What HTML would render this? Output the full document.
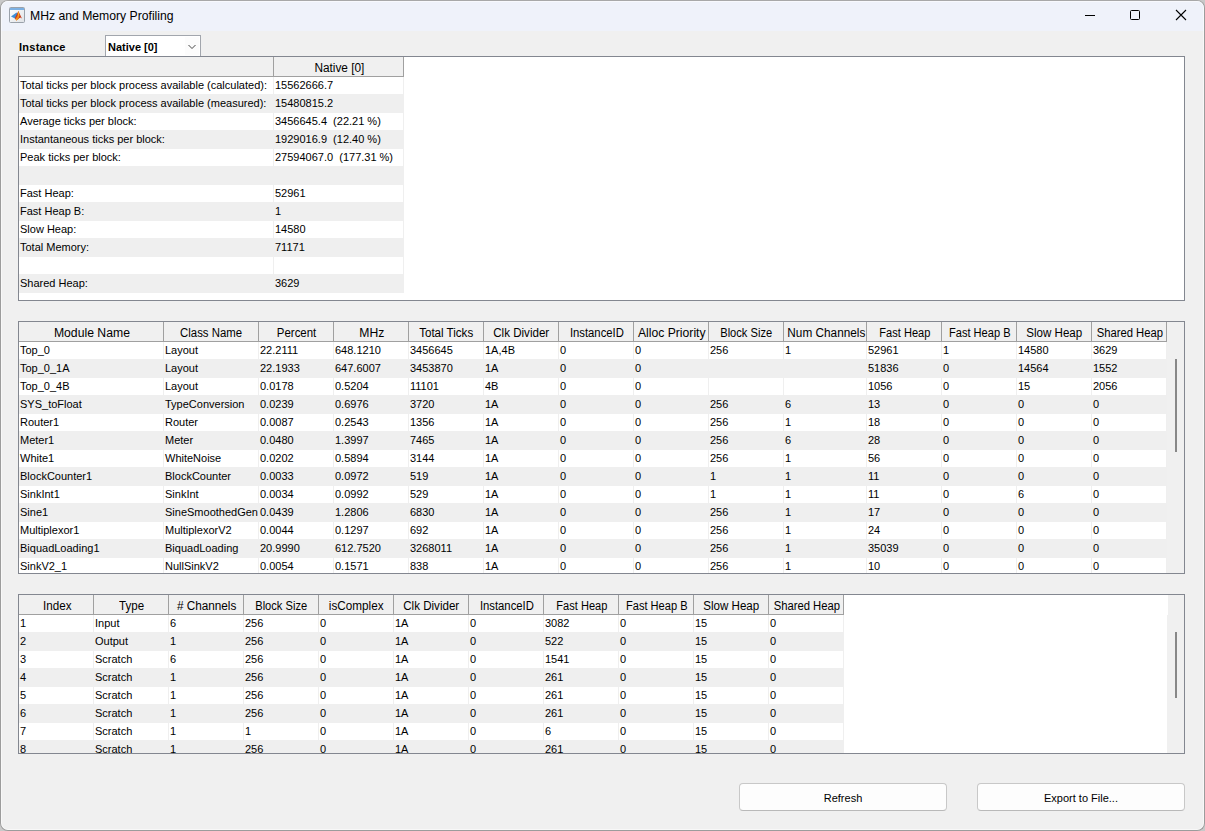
<!DOCTYPE html>
<html><head><meta charset="utf-8"><title>MHz and Memory Profiling</title>
<style>
*{margin:0;padding:0;box-sizing:border-box}
html,body{width:1205px;height:831px;overflow:hidden;background:#c9c9c9;font-family:"Liberation Sans",sans-serif;color:#000}
.a{position:absolute}
#win{position:absolute;left:0;top:0;width:1205px;height:831px;background:#f0f0f0;border:1px solid #9c9c9c;border-top-color:#a8a8a8;border-radius:8px;overflow:hidden}
#tb{position:absolute;left:0;top:0;width:1203px;height:30px;background:#eff2fa}
.t11{font-size:11px;line-height:18px;white-space:nowrap}
.hd{position:absolute;font-size:12.5px;line-height:20px;padding-top:1px;padding-left:2px;text-align:center;white-space:nowrap;overflow:hidden;background:#f0f0f0}
.panel{position:absolute;border:1px solid #838790;background:#fff;overflow:hidden}
.row{position:absolute;height:18px}
.g{background:#efefef}
.w{background:transparent}
.cell{position:absolute;top:0;height:18px;font-size:11px;line-height:18px;white-space:pre;overflow:hidden;padding-left:2px}
.sep{position:absolute;top:0;width:1px;height:100%;background:#efefef}
.hsep{position:absolute;width:1px;background:#a0a0a0}
.btn{position:absolute;background:#fdfdfd;border:1px solid #c8c8c8;border-bottom-color:#b9b9b9;border-radius:4px;font-size:11px;text-align:center;line-height:26px;padding-top:1px}
</style></head>
<body>
<div id="win"><div id="tb"></div><svg class="a" style="left:8px;top:6px" width="16" height="16" viewBox="0 0 16 16">
<defs><linearGradient id="ig" x1="0" y1="0" x2="1" y2="1"><stop offset="0" stop-color="#ffffff"/><stop offset="1" stop-color="#dfe2e6"/></linearGradient></defs>
<rect x="0.5" y="0.5" width="15" height="15" rx="1" fill="url(#ig)" stroke="#9aa1aa"/>
<rect x="1" y="1" width="14" height="2" fill="#7cb0e3"/>
<path d="M2 9.5 L7.6 5.6 L9 7.8 L6 11.5 Z" fill="#3d8ed6"/>
<path d="M5.8 11.2 L9.4 4 L12.9 11.6 L11.2 10.6 L7.4 13.5 Z" fill="#c8381a"/>
<path d="M9.4 4 L10.6 8.2 L9.2 12.6 L7.4 13.5 L6.6 12 L8.6 8.6 Z" fill="#f08a1c"/>
<path d="M9.4 4.2 L10 7 L9 9.5 Z" fill="#f7c52a"/>
<path d="M7 12.8 L8.4 12 L7.6 13.5 Z" fill="#f7c52a"/>
</svg><div class="a" style="left:29px;top:7px;font-size:12.2px;line-height:16px;white-space:nowrap">MHz and Memory Profiling</div><div class="a" style="left:1084px;top:14px;width:10px;height:1px;background:#000"></div><div class="a" style="left:1129px;top:9px;width:10px;height:10px;border:1px solid #000;border-radius:1.5px"></div><svg class="a" style="left:1174px;top:8px" width="12" height="12" viewBox="0 0 12 12"><path d="M1 1 L11 11 M11 1 L1 11" stroke="#000" stroke-width="1.1"/></svg><div class="a" style="left:18px;top:37px;font-size:11px;font-weight:bold;line-height:18px;letter-spacing:0.25px">Instance</div><div class="a" style="left:104px;top:34px;width:96px;height:22px;background:#fff;border:1px solid #a2a6ad;border-bottom:none"></div><div class="a" style="left:184px;top:36px;width:14px;height:18px;background:#fcfcfc"></div><div class="a" style="left:107px;top:37px;font-size:11px;font-weight:bold;line-height:18px">Native [0]</div><svg class="a" style="left:186px;top:43px" width="10" height="6" viewBox="0 0 10 6"><path d="M1.5 1 L5 4.5 L8.5 1" fill="none" stroke="#333" stroke-width="0.9"/></svg><div class="panel" style="left:17px;top:55px;width:1167px;height:245px"><div class="row w" style="left:0;top:19px;width:385px;height:18px"><div class="cell" style="left:-1px;width:255px;padding-left:2px">Total ticks per block process available (calculated):</div><div class="sep" style="left:254px"></div><div class="cell" style="left:254px;width:130px;padding-left:2px">15562666.7</div><div class="sep" style="left:384px"></div></div><div class="row g" style="left:0;top:37px;width:385px;height:19px"><div class="cell" style="left:-1px;width:255px;padding-left:2px">Total ticks per block process available (measured):</div><div class="sep" style="left:254px"></div><div class="cell" style="left:254px;width:130px;padding-left:2px">15480815.2</div><div class="sep" style="left:384px"></div></div><div class="row w" style="left:0;top:55px;width:385px;height:18px"><div class="cell" style="left:-1px;width:255px;padding-left:2px">Average ticks per block:</div><div class="sep" style="left:254px"></div><div class="cell" style="left:254px;width:130px;padding-left:2px">3456645.4  (22.21 %)</div><div class="sep" style="left:384px"></div></div><div class="row g" style="left:0;top:73px;width:385px;height:19px"><div class="cell" style="left:-1px;width:255px;padding-left:2px">Instantaneous ticks per block:</div><div class="sep" style="left:254px"></div><div class="cell" style="left:254px;width:130px;padding-left:2px">1929016.9  (12.40 %)</div><div class="sep" style="left:384px"></div></div><div class="row w" style="left:0;top:91px;width:385px;height:18px"><div class="cell" style="left:-1px;width:255px;padding-left:2px">Peak ticks per block:</div><div class="sep" style="left:254px"></div><div class="cell" style="left:254px;width:130px;padding-left:2px">27594067.0  (177.31 %)</div><div class="sep" style="left:384px"></div></div><div class="row g" style="left:0;top:109px;width:385px;height:19px"><div class="sep" style="left:254px"></div><div class="sep" style="left:384px"></div></div><div class="row w" style="left:0;top:127px;width:385px;height:18px"><div class="cell" style="left:-1px;width:255px;padding-left:2px">Fast Heap:</div><div class="sep" style="left:254px"></div><div class="cell" style="left:254px;width:130px;padding-left:2px">52961</div><div class="sep" style="left:384px"></div></div><div class="row g" style="left:0;top:145px;width:385px;height:19px"><div class="cell" style="left:-1px;width:255px;padding-left:2px">Fast Heap B:</div><div class="sep" style="left:254px"></div><div class="cell" style="left:254px;width:130px;padding-left:2px">1</div><div class="sep" style="left:384px"></div></div><div class="row w" style="left:0;top:163px;width:385px;height:18px"><div class="cell" style="left:-1px;width:255px;padding-left:2px">Slow Heap:</div><div class="sep" style="left:254px"></div><div class="cell" style="left:254px;width:130px;padding-left:2px">14580</div><div class="sep" style="left:384px"></div></div><div class="row g" style="left:0;top:181px;width:385px;height:19px"><div class="cell" style="left:-1px;width:255px;padding-left:2px">Total Memory:</div><div class="sep" style="left:254px"></div><div class="cell" style="left:254px;width:130px;padding-left:2px">71171</div><div class="sep" style="left:384px"></div></div><div class="row w" style="left:0;top:199px;width:385px;height:18px"><div class="sep" style="left:254px"></div><div class="sep" style="left:384px"></div></div><div class="row g" style="left:0;top:217px;width:385px;height:19px"><div class="cell" style="left:-1px;width:255px;padding-left:2px">Shared Heap:</div><div class="sep" style="left:254px"></div><div class="cell" style="left:254px;width:130px;padding-left:2px">3629</div><div class="sep" style="left:384px"></div></div><div class="hd" style="left:0px;top:0;width:254px;height:19px"><span style="display:inline-block;transform:scaleX(1.0)"></span></div><div class="hd" style="left:254px;top:0;width:130px;height:19px"><span style="display:inline-block;transform:scaleX(0.947)">Native [0]</span></div><div class="a" style="left:0;top:19px;width:385px;height:1px;background:#a0a0a0"></div><div class="hsep" style="left:254px;top:0;height:19px"></div><div class="hsep" style="left:384px;top:0;height:19px"></div></div><div class="panel" style="left:17px;top:320px;width:1167px;height:253px"><div class="row w" style="left:0;top:19px;width:1148px;height:18px"><div class="cell" style="left:-1px;width:145px;padding-left:2px">Top_0</div><div class="sep" style="left:144px"></div><div class="cell" style="left:144px;width:95px;padding-left:2px">Layout</div><div class="sep" style="left:239px"></div><div class="cell" style="left:239px;width:75px;padding-left:2px">22.2111</div><div class="sep" style="left:314px"></div><div class="cell" style="left:314px;width:75px;padding-left:2px">648.1210</div><div class="sep" style="left:389px"></div><div class="cell" style="left:389px;width:75px;padding-left:2px">3456645</div><div class="sep" style="left:464px"></div><div class="cell" style="left:464px;width:75px;padding-left:2px">1A,4B</div><div class="sep" style="left:539px"></div><div class="cell" style="left:539px;width:75px;padding-left:2px">0</div><div class="sep" style="left:614px"></div><div class="cell" style="left:614px;width:75px;padding-left:2px">0</div><div class="sep" style="left:689px"></div><div class="cell" style="left:689px;width:75px;padding-left:2px">256</div><div class="sep" style="left:764px"></div><div class="cell" style="left:764px;width:83px;padding-left:2px">1</div><div class="sep" style="left:847px"></div><div class="cell" style="left:847px;width:75px;padding-left:2px">52961</div><div class="sep" style="left:922px"></div><div class="cell" style="left:922px;width:75px;padding-left:2px">1</div><div class="sep" style="left:997px"></div><div class="cell" style="left:997px;width:75px;padding-left:2px">14580</div><div class="sep" style="left:1072px"></div><div class="cell" style="left:1072px;width:75px;padding-left:2px">3629</div><div class="sep" style="left:1147px"></div></div><div class="row g" style="left:0;top:37px;width:1148px;height:19px"><div class="cell" style="left:-1px;width:145px;padding-left:2px">Top_0_1A</div><div class="sep" style="left:144px"></div><div class="cell" style="left:144px;width:95px;padding-left:2px">Layout</div><div class="sep" style="left:239px"></div><div class="cell" style="left:239px;width:75px;padding-left:2px">22.1933</div><div class="sep" style="left:314px"></div><div class="cell" style="left:314px;width:75px;padding-left:2px">647.6007</div><div class="sep" style="left:389px"></div><div class="cell" style="left:389px;width:75px;padding-left:2px">3453870</div><div class="sep" style="left:464px"></div><div class="cell" style="left:464px;width:75px;padding-left:2px">1A</div><div class="sep" style="left:539px"></div><div class="cell" style="left:539px;width:75px;padding-left:2px">0</div><div class="sep" style="left:614px"></div><div class="cell" style="left:614px;width:75px;padding-left:2px">0</div><div class="sep" style="left:689px"></div><div class="sep" style="left:764px"></div><div class="sep" style="left:847px"></div><div class="cell" style="left:847px;width:75px;padding-left:2px">51836</div><div class="sep" style="left:922px"></div><div class="cell" style="left:922px;width:75px;padding-left:2px">0</div><div class="sep" style="left:997px"></div><div class="cell" style="left:997px;width:75px;padding-left:2px">14564</div><div class="sep" style="left:1072px"></div><div class="cell" style="left:1072px;width:75px;padding-left:2px">1552</div><div class="sep" style="left:1147px"></div></div><div class="row w" style="left:0;top:55px;width:1148px;height:18px"><div class="cell" style="left:-1px;width:145px;padding-left:2px">Top_0_4B</div><div class="sep" style="left:144px"></div><div class="cell" style="left:144px;width:95px;padding-left:2px">Layout</div><div class="sep" style="left:239px"></div><div class="cell" style="left:239px;width:75px;padding-left:2px">0.0178</div><div class="sep" style="left:314px"></div><div class="cell" style="left:314px;width:75px;padding-left:2px">0.5204</div><div class="sep" style="left:389px"></div><div class="cell" style="left:389px;width:75px;padding-left:2px">11101</div><div class="sep" style="left:464px"></div><div class="cell" style="left:464px;width:75px;padding-left:2px">4B</div><div class="sep" style="left:539px"></div><div class="cell" style="left:539px;width:75px;padding-left:2px">0</div><div class="sep" style="left:614px"></div><div class="cell" style="left:614px;width:75px;padding-left:2px">0</div><div class="sep" style="left:689px"></div><div class="sep" style="left:764px"></div><div class="sep" style="left:847px"></div><div class="cell" style="left:847px;width:75px;padding-left:2px">1056</div><div class="sep" style="left:922px"></div><div class="cell" style="left:922px;width:75px;padding-left:2px">0</div><div class="sep" style="left:997px"></div><div class="cell" style="left:997px;width:75px;padding-left:2px">15</div><div class="sep" style="left:1072px"></div><div class="cell" style="left:1072px;width:75px;padding-left:2px">2056</div><div class="sep" style="left:1147px"></div></div><div class="row g" style="left:0;top:73px;width:1148px;height:19px"><div class="cell" style="left:-1px;width:145px;padding-left:2px">SYS_toFloat</div><div class="sep" style="left:144px"></div><div class="cell" style="left:144px;width:95px;padding-left:2px">TypeConversion</div><div class="sep" style="left:239px"></div><div class="cell" style="left:239px;width:75px;padding-left:2px">0.0239</div><div class="sep" style="left:314px"></div><div class="cell" style="left:314px;width:75px;padding-left:2px">0.6976</div><div class="sep" style="left:389px"></div><div class="cell" style="left:389px;width:75px;padding-left:2px">3720</div><div class="sep" style="left:464px"></div><div class="cell" style="left:464px;width:75px;padding-left:2px">1A</div><div class="sep" style="left:539px"></div><div class="cell" style="left:539px;width:75px;padding-left:2px">0</div><div class="sep" style="left:614px"></div><div class="cell" style="left:614px;width:75px;padding-left:2px">0</div><div class="sep" style="left:689px"></div><div class="cell" style="left:689px;width:75px;padding-left:2px">256</div><div class="sep" style="left:764px"></div><div class="cell" style="left:764px;width:83px;padding-left:2px">6</div><div class="sep" style="left:847px"></div><div class="cell" style="left:847px;width:75px;padding-left:2px">13</div><div class="sep" style="left:922px"></div><div class="cell" style="left:922px;width:75px;padding-left:2px">0</div><div class="sep" style="left:997px"></div><div class="cell" style="left:997px;width:75px;padding-left:2px">0</div><div class="sep" style="left:1072px"></div><div class="cell" style="left:1072px;width:75px;padding-left:2px">0</div><div class="sep" style="left:1147px"></div></div><div class="row w" style="left:0;top:91px;width:1148px;height:18px"><div class="cell" style="left:-1px;width:145px;padding-left:2px">Router1</div><div class="sep" style="left:144px"></div><div class="cell" style="left:144px;width:95px;padding-left:2px">Router</div><div class="sep" style="left:239px"></div><div class="cell" style="left:239px;width:75px;padding-left:2px">0.0087</div><div class="sep" style="left:314px"></div><div class="cell" style="left:314px;width:75px;padding-left:2px">0.2543</div><div class="sep" style="left:389px"></div><div class="cell" style="left:389px;width:75px;padding-left:2px">1356</div><div class="sep" style="left:464px"></div><div class="cell" style="left:464px;width:75px;padding-left:2px">1A</div><div class="sep" style="left:539px"></div><div class="cell" style="left:539px;width:75px;padding-left:2px">0</div><div class="sep" style="left:614px"></div><div class="cell" style="left:614px;width:75px;padding-left:2px">0</div><div class="sep" style="left:689px"></div><div class="cell" style="left:689px;width:75px;padding-left:2px">256</div><div class="sep" style="left:764px"></div><div class="cell" style="left:764px;width:83px;padding-left:2px">1</div><div class="sep" style="left:847px"></div><div class="cell" style="left:847px;width:75px;padding-left:2px">18</div><div class="sep" style="left:922px"></div><div class="cell" style="left:922px;width:75px;padding-left:2px">0</div><div class="sep" style="left:997px"></div><div class="cell" style="left:997px;width:75px;padding-left:2px">0</div><div class="sep" style="left:1072px"></div><div class="cell" style="left:1072px;width:75px;padding-left:2px">0</div><div class="sep" style="left:1147px"></div></div><div class="row g" style="left:0;top:109px;width:1148px;height:19px"><div class="cell" style="left:-1px;width:145px;padding-left:2px">Meter1</div><div class="sep" style="left:144px"></div><div class="cell" style="left:144px;width:95px;padding-left:2px">Meter</div><div class="sep" style="left:239px"></div><div class="cell" style="left:239px;width:75px;padding-left:2px">0.0480</div><div class="sep" style="left:314px"></div><div class="cell" style="left:314px;width:75px;padding-left:2px">1.3997</div><div class="sep" style="left:389px"></div><div class="cell" style="left:389px;width:75px;padding-left:2px">7465</div><div class="sep" style="left:464px"></div><div class="cell" style="left:464px;width:75px;padding-left:2px">1A</div><div class="sep" style="left:539px"></div><div class="cell" style="left:539px;width:75px;padding-left:2px">0</div><div class="sep" style="left:614px"></div><div class="cell" style="left:614px;width:75px;padding-left:2px">0</div><div class="sep" style="left:689px"></div><div class="cell" style="left:689px;width:75px;padding-left:2px">256</div><div class="sep" style="left:764px"></div><div class="cell" style="left:764px;width:83px;padding-left:2px">6</div><div class="sep" style="left:847px"></div><div class="cell" style="left:847px;width:75px;padding-left:2px">28</div><div class="sep" style="left:922px"></div><div class="cell" style="left:922px;width:75px;padding-left:2px">0</div><div class="sep" style="left:997px"></div><div class="cell" style="left:997px;width:75px;padding-left:2px">0</div><div class="sep" style="left:1072px"></div><div class="cell" style="left:1072px;width:75px;padding-left:2px">0</div><div class="sep" style="left:1147px"></div></div><div class="row w" style="left:0;top:127px;width:1148px;height:18px"><div class="cell" style="left:-1px;width:145px;padding-left:2px">White1</div><div class="sep" style="left:144px"></div><div class="cell" style="left:144px;width:95px;padding-left:2px">WhiteNoise</div><div class="sep" style="left:239px"></div><div class="cell" style="left:239px;width:75px;padding-left:2px">0.0202</div><div class="sep" style="left:314px"></div><div class="cell" style="left:314px;width:75px;padding-left:2px">0.5894</div><div class="sep" style="left:389px"></div><div class="cell" style="left:389px;width:75px;padding-left:2px">3144</div><div class="sep" style="left:464px"></div><div class="cell" style="left:464px;width:75px;padding-left:2px">1A</div><div class="sep" style="left:539px"></div><div class="cell" style="left:539px;width:75px;padding-left:2px">0</div><div class="sep" style="left:614px"></div><div class="cell" style="left:614px;width:75px;padding-left:2px">0</div><div class="sep" style="left:689px"></div><div class="cell" style="left:689px;width:75px;padding-left:2px">256</div><div class="sep" style="left:764px"></div><div class="cell" style="left:764px;width:83px;padding-left:2px">1</div><div class="sep" style="left:847px"></div><div class="cell" style="left:847px;width:75px;padding-left:2px">56</div><div class="sep" style="left:922px"></div><div class="cell" style="left:922px;width:75px;padding-left:2px">0</div><div class="sep" style="left:997px"></div><div class="cell" style="left:997px;width:75px;padding-left:2px">0</div><div class="sep" style="left:1072px"></div><div class="cell" style="left:1072px;width:75px;padding-left:2px">0</div><div class="sep" style="left:1147px"></div></div><div class="row g" style="left:0;top:145px;width:1148px;height:19px"><div class="cell" style="left:-1px;width:145px;padding-left:2px">BlockCounter1</div><div class="sep" style="left:144px"></div><div class="cell" style="left:144px;width:95px;padding-left:2px">BlockCounter</div><div class="sep" style="left:239px"></div><div class="cell" style="left:239px;width:75px;padding-left:2px">0.0033</div><div class="sep" style="left:314px"></div><div class="cell" style="left:314px;width:75px;padding-left:2px">0.0972</div><div class="sep" style="left:389px"></div><div class="cell" style="left:389px;width:75px;padding-left:2px">519</div><div class="sep" style="left:464px"></div><div class="cell" style="left:464px;width:75px;padding-left:2px">1A</div><div class="sep" style="left:539px"></div><div class="cell" style="left:539px;width:75px;padding-left:2px">0</div><div class="sep" style="left:614px"></div><div class="cell" style="left:614px;width:75px;padding-left:2px">0</div><div class="sep" style="left:689px"></div><div class="cell" style="left:689px;width:75px;padding-left:2px">1</div><div class="sep" style="left:764px"></div><div class="cell" style="left:764px;width:83px;padding-left:2px">1</div><div class="sep" style="left:847px"></div><div class="cell" style="left:847px;width:75px;padding-left:2px">11</div><div class="sep" style="left:922px"></div><div class="cell" style="left:922px;width:75px;padding-left:2px">0</div><div class="sep" style="left:997px"></div><div class="cell" style="left:997px;width:75px;padding-left:2px">0</div><div class="sep" style="left:1072px"></div><div class="cell" style="left:1072px;width:75px;padding-left:2px">0</div><div class="sep" style="left:1147px"></div></div><div class="row w" style="left:0;top:163px;width:1148px;height:18px"><div class="cell" style="left:-1px;width:145px;padding-left:2px">SinkInt1</div><div class="sep" style="left:144px"></div><div class="cell" style="left:144px;width:95px;padding-left:2px">SinkInt</div><div class="sep" style="left:239px"></div><div class="cell" style="left:239px;width:75px;padding-left:2px">0.0034</div><div class="sep" style="left:314px"></div><div class="cell" style="left:314px;width:75px;padding-left:2px">0.0992</div><div class="sep" style="left:389px"></div><div class="cell" style="left:389px;width:75px;padding-left:2px">529</div><div class="sep" style="left:464px"></div><div class="cell" style="left:464px;width:75px;padding-left:2px">1A</div><div class="sep" style="left:539px"></div><div class="cell" style="left:539px;width:75px;padding-left:2px">0</div><div class="sep" style="left:614px"></div><div class="cell" style="left:614px;width:75px;padding-left:2px">0</div><div class="sep" style="left:689px"></div><div class="cell" style="left:689px;width:75px;padding-left:2px">1</div><div class="sep" style="left:764px"></div><div class="cell" style="left:764px;width:83px;padding-left:2px">1</div><div class="sep" style="left:847px"></div><div class="cell" style="left:847px;width:75px;padding-left:2px">11</div><div class="sep" style="left:922px"></div><div class="cell" style="left:922px;width:75px;padding-left:2px">0</div><div class="sep" style="left:997px"></div><div class="cell" style="left:997px;width:75px;padding-left:2px">6</div><div class="sep" style="left:1072px"></div><div class="cell" style="left:1072px;width:75px;padding-left:2px">0</div><div class="sep" style="left:1147px"></div></div><div class="row g" style="left:0;top:181px;width:1148px;height:19px"><div class="cell" style="left:-1px;width:145px;padding-left:2px">Sine1</div><div class="sep" style="left:144px"></div><div class="cell" style="left:144px;width:95px;padding-left:2px">SineSmoothedGen</div><div class="sep" style="left:239px"></div><div class="cell" style="left:239px;width:75px;padding-left:2px">0.0439</div><div class="sep" style="left:314px"></div><div class="cell" style="left:314px;width:75px;padding-left:2px">1.2806</div><div class="sep" style="left:389px"></div><div class="cell" style="left:389px;width:75px;padding-left:2px">6830</div><div class="sep" style="left:464px"></div><div class="cell" style="left:464px;width:75px;padding-left:2px">1A</div><div class="sep" style="left:539px"></div><div class="cell" style="left:539px;width:75px;padding-left:2px">0</div><div class="sep" style="left:614px"></div><div class="cell" style="left:614px;width:75px;padding-left:2px">0</div><div class="sep" style="left:689px"></div><div class="cell" style="left:689px;width:75px;padding-left:2px">256</div><div class="sep" style="left:764px"></div><div class="cell" style="left:764px;width:83px;padding-left:2px">1</div><div class="sep" style="left:847px"></div><div class="cell" style="left:847px;width:75px;padding-left:2px">17</div><div class="sep" style="left:922px"></div><div class="cell" style="left:922px;width:75px;padding-left:2px">0</div><div class="sep" style="left:997px"></div><div class="cell" style="left:997px;width:75px;padding-left:2px">0</div><div class="sep" style="left:1072px"></div><div class="cell" style="left:1072px;width:75px;padding-left:2px">0</div><div class="sep" style="left:1147px"></div></div><div class="row w" style="left:0;top:199px;width:1148px;height:18px"><div class="cell" style="left:-1px;width:145px;padding-left:2px">Multiplexor1</div><div class="sep" style="left:144px"></div><div class="cell" style="left:144px;width:95px;padding-left:2px">MultiplexorV2</div><div class="sep" style="left:239px"></div><div class="cell" style="left:239px;width:75px;padding-left:2px">0.0044</div><div class="sep" style="left:314px"></div><div class="cell" style="left:314px;width:75px;padding-left:2px">0.1297</div><div class="sep" style="left:389px"></div><div class="cell" style="left:389px;width:75px;padding-left:2px">692</div><div class="sep" style="left:464px"></div><div class="cell" style="left:464px;width:75px;padding-left:2px">1A</div><div class="sep" style="left:539px"></div><div class="cell" style="left:539px;width:75px;padding-left:2px">0</div><div class="sep" style="left:614px"></div><div class="cell" style="left:614px;width:75px;padding-left:2px">0</div><div class="sep" style="left:689px"></div><div class="cell" style="left:689px;width:75px;padding-left:2px">256</div><div class="sep" style="left:764px"></div><div class="cell" style="left:764px;width:83px;padding-left:2px">1</div><div class="sep" style="left:847px"></div><div class="cell" style="left:847px;width:75px;padding-left:2px">24</div><div class="sep" style="left:922px"></div><div class="cell" style="left:922px;width:75px;padding-left:2px">0</div><div class="sep" style="left:997px"></div><div class="cell" style="left:997px;width:75px;padding-left:2px">0</div><div class="sep" style="left:1072px"></div><div class="cell" style="left:1072px;width:75px;padding-left:2px">0</div><div class="sep" style="left:1147px"></div></div><div class="row g" style="left:0;top:217px;width:1148px;height:19px"><div class="cell" style="left:-1px;width:145px;padding-left:2px">BiquadLoading1</div><div class="sep" style="left:144px"></div><div class="cell" style="left:144px;width:95px;padding-left:2px">BiquadLoading</div><div class="sep" style="left:239px"></div><div class="cell" style="left:239px;width:75px;padding-left:2px">20.9990</div><div class="sep" style="left:314px"></div><div class="cell" style="left:314px;width:75px;padding-left:2px">612.7520</div><div class="sep" style="left:389px"></div><div class="cell" style="left:389px;width:75px;padding-left:2px">3268011</div><div class="sep" style="left:464px"></div><div class="cell" style="left:464px;width:75px;padding-left:2px">1A</div><div class="sep" style="left:539px"></div><div class="cell" style="left:539px;width:75px;padding-left:2px">0</div><div class="sep" style="left:614px"></div><div class="cell" style="left:614px;width:75px;padding-left:2px">0</div><div class="sep" style="left:689px"></div><div class="cell" style="left:689px;width:75px;padding-left:2px">256</div><div class="sep" style="left:764px"></div><div class="cell" style="left:764px;width:83px;padding-left:2px">1</div><div class="sep" style="left:847px"></div><div class="cell" style="left:847px;width:75px;padding-left:2px">35039</div><div class="sep" style="left:922px"></div><div class="cell" style="left:922px;width:75px;padding-left:2px">0</div><div class="sep" style="left:997px"></div><div class="cell" style="left:997px;width:75px;padding-left:2px">0</div><div class="sep" style="left:1072px"></div><div class="cell" style="left:1072px;width:75px;padding-left:2px">0</div><div class="sep" style="left:1147px"></div></div><div class="row w" style="left:0;top:235px;width:1148px;height:18px"><div class="cell" style="left:-1px;width:145px;padding-left:2px">SinkV2_1</div><div class="sep" style="left:144px"></div><div class="cell" style="left:144px;width:95px;padding-left:2px">NullSinkV2</div><div class="sep" style="left:239px"></div><div class="cell" style="left:239px;width:75px;padding-left:2px">0.0054</div><div class="sep" style="left:314px"></div><div class="cell" style="left:314px;width:75px;padding-left:2px">0.1571</div><div class="sep" style="left:389px"></div><div class="cell" style="left:389px;width:75px;padding-left:2px">838</div><div class="sep" style="left:464px"></div><div class="cell" style="left:464px;width:75px;padding-left:2px">1A</div><div class="sep" style="left:539px"></div><div class="cell" style="left:539px;width:75px;padding-left:2px">0</div><div class="sep" style="left:614px"></div><div class="cell" style="left:614px;width:75px;padding-left:2px">0</div><div class="sep" style="left:689px"></div><div class="cell" style="left:689px;width:75px;padding-left:2px">256</div><div class="sep" style="left:764px"></div><div class="cell" style="left:764px;width:83px;padding-left:2px">1</div><div class="sep" style="left:847px"></div><div class="cell" style="left:847px;width:75px;padding-left:2px">10</div><div class="sep" style="left:922px"></div><div class="cell" style="left:922px;width:75px;padding-left:2px">0</div><div class="sep" style="left:997px"></div><div class="cell" style="left:997px;width:75px;padding-left:2px">0</div><div class="sep" style="left:1072px"></div><div class="cell" style="left:1072px;width:75px;padding-left:2px">0</div><div class="sep" style="left:1147px"></div></div><div class="hd" style="left:0px;top:0;width:144px;height:19px"><span style="display:inline-block;transform:scaleX(0.977)">Module Name</span></div><div class="hd" style="left:144px;top:0;width:95px;height:19px"><span style="display:inline-block;transform:scaleX(0.91)">Class Name</span></div><div class="hd" style="left:239px;top:0;width:75px;height:19px"><span style="display:inline-block;transform:scaleX(0.914)">Percent</span></div><div class="hd" style="left:314px;top:0;width:75px;height:19px"><span style="display:inline-block;transform:scaleX(0.973)">MHz</span></div><div class="hd" style="left:389px;top:0;width:75px;height:19px"><span style="display:inline-block;transform:scaleX(0.926)">Total Ticks</span></div><div class="hd" style="left:464px;top:0;width:75px;height:19px"><span style="display:inline-block;transform:scaleX(0.927)">Clk Divider</span></div><div class="hd" style="left:539px;top:0;width:75px;height:19px"><span style="display:inline-block;transform:scaleX(0.903)">InstanceID</span></div><div class="hd" style="left:614px;top:0;width:75px;height:19px"><span style="display:inline-block;transform:scaleX(0.974)">Alloc Priority</span></div><div class="hd" style="left:689px;top:0;width:75px;height:19px"><span style="display:inline-block;transform:scaleX(0.89)">Block Size</span></div><div class="hd" style="left:764px;top:0;width:83px;height:19px"><span style="display:inline-block;transform:scaleX(0.943)">Num Channels</span></div><div class="hd" style="left:847px;top:0;width:75px;height:19px"><span style="display:inline-block;transform:scaleX(0.884)">Fast Heap</span></div><div class="hd" style="left:922px;top:0;width:75px;height:19px"><span style="display:inline-block;transform:scaleX(0.886)">Fast Heap B</span></div><div class="hd" style="left:997px;top:0;width:75px;height:19px"><span style="display:inline-block;transform:scaleX(0.927)">Slow Heap</span></div><div class="hd" style="left:1072px;top:0;width:75px;height:19px"><span style="display:inline-block;transform:scaleX(0.901)">Shared Heap</span></div><div class="a" style="left:0;top:19px;width:1148px;height:1px;background:#a0a0a0"></div><div class="hsep" style="left:144px;top:0;height:19px"></div><div class="hsep" style="left:239px;top:0;height:19px"></div><div class="hsep" style="left:314px;top:0;height:19px"></div><div class="hsep" style="left:389px;top:0;height:19px"></div><div class="hsep" style="left:464px;top:0;height:19px"></div><div class="hsep" style="left:539px;top:0;height:19px"></div><div class="hsep" style="left:614px;top:0;height:19px"></div><div class="hsep" style="left:689px;top:0;height:19px"></div><div class="hsep" style="left:764px;top:0;height:19px"></div><div class="hsep" style="left:847px;top:0;height:19px"></div><div class="hsep" style="left:922px;top:0;height:19px"></div><div class="hsep" style="left:997px;top:0;height:19px"></div><div class="hsep" style="left:1072px;top:0;height:19px"></div><div class="hsep" style="left:1147px;top:0;height:19px"></div><div class="a" style="left:1148px;top:0;width:17px;height:253px;background:#f0f0f0"></div><div class="a" style="left:1156px;top:37px;width:2px;height:93px;background:#888"></div></div><div class="panel" style="left:17px;top:593px;width:1167px;height:160px"><div class="row w" style="left:0;top:19px;width:825px;height:18px"><div class="cell" style="left:-1px;width:75px;padding-left:2px">1</div><div class="sep" style="left:74px"></div><div class="cell" style="left:74px;width:75px;padding-left:2px">Input</div><div class="sep" style="left:149px"></div><div class="cell" style="left:149px;width:75px;padding-left:2px">6</div><div class="sep" style="left:224px"></div><div class="cell" style="left:224px;width:75px;padding-left:2px">256</div><div class="sep" style="left:299px"></div><div class="cell" style="left:299px;width:75px;padding-left:2px">0</div><div class="sep" style="left:374px"></div><div class="cell" style="left:374px;width:75px;padding-left:2px">1A</div><div class="sep" style="left:449px"></div><div class="cell" style="left:449px;width:75px;padding-left:2px">0</div><div class="sep" style="left:524px"></div><div class="cell" style="left:524px;width:75px;padding-left:2px">3082</div><div class="sep" style="left:599px"></div><div class="cell" style="left:599px;width:75px;padding-left:2px">0</div><div class="sep" style="left:674px"></div><div class="cell" style="left:674px;width:75px;padding-left:2px">15</div><div class="sep" style="left:749px"></div><div class="cell" style="left:749px;width:75px;padding-left:2px">0</div><div class="sep" style="left:824px"></div></div><div class="row g" style="left:0;top:37px;width:825px;height:19px"><div class="cell" style="left:-1px;width:75px;padding-left:2px">2</div><div class="sep" style="left:74px"></div><div class="cell" style="left:74px;width:75px;padding-left:2px">Output</div><div class="sep" style="left:149px"></div><div class="cell" style="left:149px;width:75px;padding-left:2px">1</div><div class="sep" style="left:224px"></div><div class="cell" style="left:224px;width:75px;padding-left:2px">256</div><div class="sep" style="left:299px"></div><div class="cell" style="left:299px;width:75px;padding-left:2px">0</div><div class="sep" style="left:374px"></div><div class="cell" style="left:374px;width:75px;padding-left:2px">1A</div><div class="sep" style="left:449px"></div><div class="cell" style="left:449px;width:75px;padding-left:2px">0</div><div class="sep" style="left:524px"></div><div class="cell" style="left:524px;width:75px;padding-left:2px">522</div><div class="sep" style="left:599px"></div><div class="cell" style="left:599px;width:75px;padding-left:2px">0</div><div class="sep" style="left:674px"></div><div class="cell" style="left:674px;width:75px;padding-left:2px">15</div><div class="sep" style="left:749px"></div><div class="cell" style="left:749px;width:75px;padding-left:2px">0</div><div class="sep" style="left:824px"></div></div><div class="row w" style="left:0;top:55px;width:825px;height:18px"><div class="cell" style="left:-1px;width:75px;padding-left:2px">3</div><div class="sep" style="left:74px"></div><div class="cell" style="left:74px;width:75px;padding-left:2px">Scratch</div><div class="sep" style="left:149px"></div><div class="cell" style="left:149px;width:75px;padding-left:2px">6</div><div class="sep" style="left:224px"></div><div class="cell" style="left:224px;width:75px;padding-left:2px">256</div><div class="sep" style="left:299px"></div><div class="cell" style="left:299px;width:75px;padding-left:2px">0</div><div class="sep" style="left:374px"></div><div class="cell" style="left:374px;width:75px;padding-left:2px">1A</div><div class="sep" style="left:449px"></div><div class="cell" style="left:449px;width:75px;padding-left:2px">0</div><div class="sep" style="left:524px"></div><div class="cell" style="left:524px;width:75px;padding-left:2px">1541</div><div class="sep" style="left:599px"></div><div class="cell" style="left:599px;width:75px;padding-left:2px">0</div><div class="sep" style="left:674px"></div><div class="cell" style="left:674px;width:75px;padding-left:2px">15</div><div class="sep" style="left:749px"></div><div class="cell" style="left:749px;width:75px;padding-left:2px">0</div><div class="sep" style="left:824px"></div></div><div class="row g" style="left:0;top:73px;width:825px;height:19px"><div class="cell" style="left:-1px;width:75px;padding-left:2px">4</div><div class="sep" style="left:74px"></div><div class="cell" style="left:74px;width:75px;padding-left:2px">Scratch</div><div class="sep" style="left:149px"></div><div class="cell" style="left:149px;width:75px;padding-left:2px">1</div><div class="sep" style="left:224px"></div><div class="cell" style="left:224px;width:75px;padding-left:2px">256</div><div class="sep" style="left:299px"></div><div class="cell" style="left:299px;width:75px;padding-left:2px">0</div><div class="sep" style="left:374px"></div><div class="cell" style="left:374px;width:75px;padding-left:2px">1A</div><div class="sep" style="left:449px"></div><div class="cell" style="left:449px;width:75px;padding-left:2px">0</div><div class="sep" style="left:524px"></div><div class="cell" style="left:524px;width:75px;padding-left:2px">261</div><div class="sep" style="left:599px"></div><div class="cell" style="left:599px;width:75px;padding-left:2px">0</div><div class="sep" style="left:674px"></div><div class="cell" style="left:674px;width:75px;padding-left:2px">15</div><div class="sep" style="left:749px"></div><div class="cell" style="left:749px;width:75px;padding-left:2px">0</div><div class="sep" style="left:824px"></div></div><div class="row w" style="left:0;top:91px;width:825px;height:18px"><div class="cell" style="left:-1px;width:75px;padding-left:2px">5</div><div class="sep" style="left:74px"></div><div class="cell" style="left:74px;width:75px;padding-left:2px">Scratch</div><div class="sep" style="left:149px"></div><div class="cell" style="left:149px;width:75px;padding-left:2px">1</div><div class="sep" style="left:224px"></div><div class="cell" style="left:224px;width:75px;padding-left:2px">256</div><div class="sep" style="left:299px"></div><div class="cell" style="left:299px;width:75px;padding-left:2px">0</div><div class="sep" style="left:374px"></div><div class="cell" style="left:374px;width:75px;padding-left:2px">1A</div><div class="sep" style="left:449px"></div><div class="cell" style="left:449px;width:75px;padding-left:2px">0</div><div class="sep" style="left:524px"></div><div class="cell" style="left:524px;width:75px;padding-left:2px">261</div><div class="sep" style="left:599px"></div><div class="cell" style="left:599px;width:75px;padding-left:2px">0</div><div class="sep" style="left:674px"></div><div class="cell" style="left:674px;width:75px;padding-left:2px">15</div><div class="sep" style="left:749px"></div><div class="cell" style="left:749px;width:75px;padding-left:2px">0</div><div class="sep" style="left:824px"></div></div><div class="row g" style="left:0;top:109px;width:825px;height:19px"><div class="cell" style="left:-1px;width:75px;padding-left:2px">6</div><div class="sep" style="left:74px"></div><div class="cell" style="left:74px;width:75px;padding-left:2px">Scratch</div><div class="sep" style="left:149px"></div><div class="cell" style="left:149px;width:75px;padding-left:2px">1</div><div class="sep" style="left:224px"></div><div class="cell" style="left:224px;width:75px;padding-left:2px">256</div><div class="sep" style="left:299px"></div><div class="cell" style="left:299px;width:75px;padding-left:2px">0</div><div class="sep" style="left:374px"></div><div class="cell" style="left:374px;width:75px;padding-left:2px">1A</div><div class="sep" style="left:449px"></div><div class="cell" style="left:449px;width:75px;padding-left:2px">0</div><div class="sep" style="left:524px"></div><div class="cell" style="left:524px;width:75px;padding-left:2px">261</div><div class="sep" style="left:599px"></div><div class="cell" style="left:599px;width:75px;padding-left:2px">0</div><div class="sep" style="left:674px"></div><div class="cell" style="left:674px;width:75px;padding-left:2px">15</div><div class="sep" style="left:749px"></div><div class="cell" style="left:749px;width:75px;padding-left:2px">0</div><div class="sep" style="left:824px"></div></div><div class="row w" style="left:0;top:127px;width:825px;height:18px"><div class="cell" style="left:-1px;width:75px;padding-left:2px">7</div><div class="sep" style="left:74px"></div><div class="cell" style="left:74px;width:75px;padding-left:2px">Scratch</div><div class="sep" style="left:149px"></div><div class="cell" style="left:149px;width:75px;padding-left:2px">1</div><div class="sep" style="left:224px"></div><div class="cell" style="left:224px;width:75px;padding-left:2px">1</div><div class="sep" style="left:299px"></div><div class="cell" style="left:299px;width:75px;padding-left:2px">0</div><div class="sep" style="left:374px"></div><div class="cell" style="left:374px;width:75px;padding-left:2px">1A</div><div class="sep" style="left:449px"></div><div class="cell" style="left:449px;width:75px;padding-left:2px">0</div><div class="sep" style="left:524px"></div><div class="cell" style="left:524px;width:75px;padding-left:2px">6</div><div class="sep" style="left:599px"></div><div class="cell" style="left:599px;width:75px;padding-left:2px">0</div><div class="sep" style="left:674px"></div><div class="cell" style="left:674px;width:75px;padding-left:2px">15</div><div class="sep" style="left:749px"></div><div class="cell" style="left:749px;width:75px;padding-left:2px">0</div><div class="sep" style="left:824px"></div></div><div class="row g" style="left:0;top:145px;width:825px;height:19px"><div class="cell" style="left:-1px;width:75px;padding-left:2px">8</div><div class="sep" style="left:74px"></div><div class="cell" style="left:74px;width:75px;padding-left:2px">Scratch</div><div class="sep" style="left:149px"></div><div class="cell" style="left:149px;width:75px;padding-left:2px">1</div><div class="sep" style="left:224px"></div><div class="cell" style="left:224px;width:75px;padding-left:2px">256</div><div class="sep" style="left:299px"></div><div class="cell" style="left:299px;width:75px;padding-left:2px">0</div><div class="sep" style="left:374px"></div><div class="cell" style="left:374px;width:75px;padding-left:2px">1A</div><div class="sep" style="left:449px"></div><div class="cell" style="left:449px;width:75px;padding-left:2px">0</div><div class="sep" style="left:524px"></div><div class="cell" style="left:524px;width:75px;padding-left:2px">261</div><div class="sep" style="left:599px"></div><div class="cell" style="left:599px;width:75px;padding-left:2px">0</div><div class="sep" style="left:674px"></div><div class="cell" style="left:674px;width:75px;padding-left:2px">15</div><div class="sep" style="left:749px"></div><div class="cell" style="left:749px;width:75px;padding-left:2px">0</div><div class="sep" style="left:824px"></div></div><div class="hd" style="left:0px;top:0;width:74px;height:19px"><span style="display:inline-block;transform:scaleX(0.931)">Index</span></div><div class="hd" style="left:74px;top:0;width:75px;height:19px"><span style="display:inline-block;transform:scaleX(0.923)">Type</span></div><div class="hd" style="left:149px;top:0;width:75px;height:19px"><span style="display:inline-block;transform:scaleX(0.94)"># Channels</span></div><div class="hd" style="left:224px;top:0;width:75px;height:19px"><span style="display:inline-block;transform:scaleX(0.89)">Block Size</span></div><div class="hd" style="left:299px;top:0;width:75px;height:19px"><span style="display:inline-block;transform:scaleX(0.938)">isComplex</span></div><div class="hd" style="left:374px;top:0;width:75px;height:19px"><span style="display:inline-block;transform:scaleX(0.927)">Clk Divider</span></div><div class="hd" style="left:449px;top:0;width:75px;height:19px"><span style="display:inline-block;transform:scaleX(0.903)">InstanceID</span></div><div class="hd" style="left:524px;top:0;width:75px;height:19px"><span style="display:inline-block;transform:scaleX(0.884)">Fast Heap</span></div><div class="hd" style="left:599px;top:0;width:75px;height:19px"><span style="display:inline-block;transform:scaleX(0.886)">Fast Heap B</span></div><div class="hd" style="left:674px;top:0;width:75px;height:19px"><span style="display:inline-block;transform:scaleX(0.927)">Slow Heap</span></div><div class="hd" style="left:749px;top:0;width:75px;height:19px"><span style="display:inline-block;transform:scaleX(0.901)">Shared Heap</span></div><div class="a" style="left:0;top:19px;width:825px;height:1px;background:#a0a0a0"></div><div class="hsep" style="left:74px;top:0;height:19px"></div><div class="hsep" style="left:149px;top:0;height:19px"></div><div class="hsep" style="left:224px;top:0;height:19px"></div><div class="hsep" style="left:299px;top:0;height:19px"></div><div class="hsep" style="left:374px;top:0;height:19px"></div><div class="hsep" style="left:449px;top:0;height:19px"></div><div class="hsep" style="left:524px;top:0;height:19px"></div><div class="hsep" style="left:599px;top:0;height:19px"></div><div class="hsep" style="left:674px;top:0;height:19px"></div><div class="hsep" style="left:749px;top:0;height:19px"></div><div class="hsep" style="left:824px;top:0;height:19px"></div><div class="a" style="left:1148px;top:0;width:17px;height:160px;background:#f0f0f0"></div><div class="a" style="left:1156px;top:37px;width:2px;height:66px;background:#888"></div></div><div class="a" style="left:1166px;top:594px;width:1px;height:20px;background:#fff"></div><div class="btn" style="left:738px;top:782px;width:208px;height:28px">Refresh</div><div class="btn" style="left:976px;top:782px;width:208px;height:28px">Export to File...</div><div class="a" style="left:0;top:0;width:1203px;height:829px;border:1px solid rgba(255,255,255,0.55);border-radius:7px"></div></div>
</body></html>
